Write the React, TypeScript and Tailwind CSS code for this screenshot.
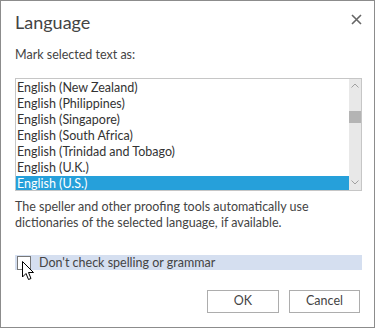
import { useState } from 'react'

const langs = [
  'English (New Zealand)',
  'English (Philippines)',
  'English (Singapore)',
  'English (South Africa)',
  'English (Trinidad and Tobago)',
  'English (U.K.)',
  'English (U.S.)',
]

export default function App() {
  const [selected, setSelected] = useState('English (U.S.)')

  return (
    <div
      className="relative h-[328px] w-[375px] border border-[#8c8c8c] bg-white text-[#444]"
      style={{ fontFamily: 'Lato, "Noto Sans", sans-serif' }}
    >
      <header className="flex h-[46px] items-start justify-between pl-[14px] pr-[12px] pt-[8px]">
        <h1 className="text-[18px] leading-[26px] text-[#444]">Language</h1>
        <button type="button" className="mt-[5px] text-[#666]" aria-label="Close">
          <svg width="11" height="11" viewBox="0 0 11 11">
            <path d="M1 1L10 10M10 1L1 10" stroke="currentColor" strokeWidth="1.6" />
          </svg>
        </button>
      </header>

      <div className="px-[14px]">
        <p className="text-[12.5px] leading-[16px] text-[#444]">Mark selected text as:</p>

        <div className="mt-[15px] flex h-[113px] w-[347px] overflow-hidden border border-[#c6c6c6]">
          <ul className="flex-1 pt-[1px]">
            {langs.map((l) => (
              <li
                key={l}
                onClick={() => setSelected(l)}
                className={
                  'h-[16px] cursor-default whitespace-nowrap pl-[1px] text-[12.5px] leading-[16px] ' +
                  (l === selected ? 'bg-[#26a0da] text-white' : 'text-[#333]')
                }
              >
                {l}
              </li>
            ))}
          </ul>
          <div className="flex w-[12px] flex-col items-center bg-[#e8e8e8]">
            <svg width="8" height="5" viewBox="0 0 8 5" className="mt-[4px]">
              <path d="M0.5 4.5L4 1L7.5 4.5" fill="none" stroke="#a0a0a0" strokeWidth="1" />
            </svg>
            <div className="mt-[23px] h-[12px] w-[12px] bg-[#b4b4b4]" />
            <div className="flex-1" />
            <svg width="8" height="5" viewBox="0 0 8 5" className="mb-[5px]">
              <path d="M0.5 0.5L4 4L7.5 0.5" fill="none" stroke="#a0a0a0" strokeWidth="1" />
            </svg>
          </div>
        </div>

        <p className="mt-[8px] text-[12.5px] leading-[16px] text-[#444]">
          The speller and other proofing tools automatically use
          <br />
          dictionaries of the selected language, if available.
        </p>

        <label className="mt-[24px] flex h-[15px] w-[347px] items-center bg-[#d5dff0]">
          <span className="ml-[2px] h-[14px] w-[14px] border border-[#777] bg-white" />
          <span className="ml-[8px] text-[12.5px] leading-[15px] text-[#444]">
            Don't check spelling or grammar
          </span>
        </label>

        <div className="mt-[20px] flex justify-end gap-[10px]">
          <button
            type="button"
            className="h-[23px] w-[72px] border border-[#adadad] bg-white text-[12.5px] text-[#444]"
          >
            OK
          </button>
          <button
            type="button"
            className="h-[23px] w-[71px] border border-[#adadad] bg-white text-[12.5px] text-[#444]"
          >
            Cancel
          </button>
        </div>
      </div>

      {/* mouse pointer */}
      <svg
        className="pointer-events-none absolute left-[21px] top-[260px]"
        width="13"
        height="20"
        viewBox="0 0 13 20"
      >
        <path
          d="M0.5 0.5V16L4 12.5L6.5 18.5L9 17.5L6.5 11.5H11.5Z"
          fill="white"
          stroke="black"
          strokeWidth="1"
          strokeLinejoin="miter"
        />
      </svg>
    </div>
  )
}
